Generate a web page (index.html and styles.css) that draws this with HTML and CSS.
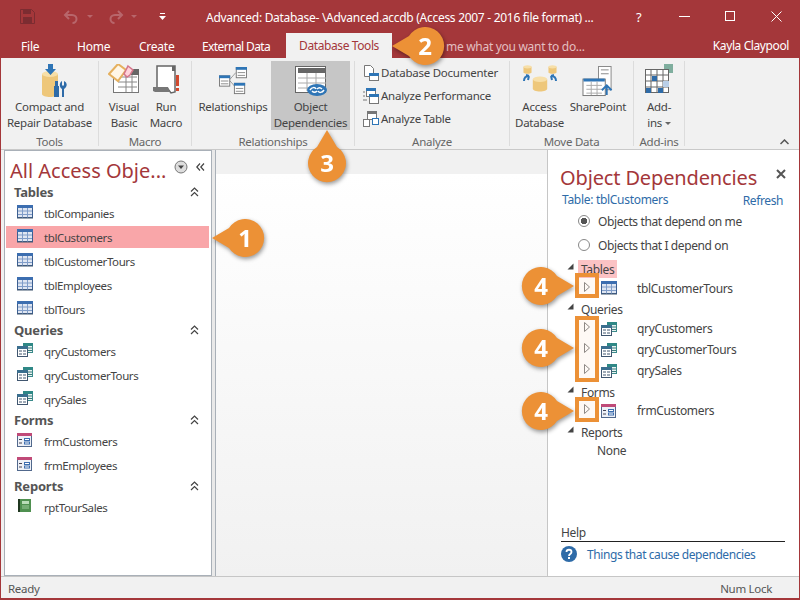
FILE: index.html
```html
<!DOCTYPE html>
<html lang="en">
<head>
<meta charset="utf-8">
<title>Object Dependencies</title>
<link rel="stylesheet" href="styles.css">
</head>
<body>
<svg class="defs" width="0" height="0" aria-hidden="true">
  <symbol id="tbl" viewBox="0 0 16 14">
    <rect x="0.5" y="0.5" width="15" height="12" fill="#dfe6f2" stroke="#3c5f91"/>
    <rect x="0" y="0" width="16" height="3" fill="#3c6eb0"/>
    <path d="M5.5 3v10M10.5 3v10M1 6h14M1 9.5h14" stroke="#7f9cc8" fill="none"/>
    <rect x="0" y="12.5" width="16" height="1" fill="#40566f"/>
  </symbol>
  <symbol id="qry" viewBox="0 0 16 14">
    <rect x="6.5" y="0.5" width="9" height="9" fill="#e8f3f2" stroke="#3a8a8a"/>
    <rect x="6" y="0" width="10" height="3" fill="#2f8886"/>
    <path d="M11 5h4M11 7.5h4" stroke="#3a7a7a"/>
    <rect x="0.5" y="3.5" width="10" height="10" fill="#fff" stroke="#40566f"/>
    <rect x="0" y="3" width="11" height="3" fill="#3b6f8f"/>
    <path d="M2 8h3M6 8h3M2 11h3M6 11h3" stroke="#40566f"/>
  </symbol>
  <symbol id="frm" viewBox="0 0 16 14">
    <rect x="0.5" y="0.5" width="14" height="13" fill="#eef1f7" stroke="#51688c"/>
    <rect x="0" y="0" width="15" height="3" fill="#c04a78"/>
    <path d="M2 6.5h3M2 10h3" stroke="#445"/>
    <rect x="7.5" y="5.5" width="5" height="2" fill="#fff" stroke="#3c6eb0"/>
    <rect x="7.5" y="9" width="5" height="2" fill="#fff" stroke="#3c6eb0"/>
  </symbol>
  <symbol id="rpt" viewBox="0 0 14 14">
    <rect x="0" y="0" width="13" height="13" fill="#4f9050"/>
    <rect x="0" y="0" width="2" height="13" fill="#203820"/>
    <rect x="4" y="2" width="7" height="3" fill="#b9dcb8"/>
    <path d="M4 7h7M4 9h7" stroke="#9ccb9a"/>
  </symbol>
  <symbol id="arrow" viewBox="0 0 8 12">
    <path d="M1.5 1.500L6.500 6l-5 4.500z" fill="#fff" stroke="#8a8a8a"/>
  </symbol>
  <symbol id="open" viewBox="0 0 7 7">
    <path d="M6.500 0.500v6h-6z" fill="#444"/>
  </symbol>
  <symbol id="chev" viewBox="0 0 9 10">
    <path d="M1 4.500l3.500-3.500 3.500 3.500M1 9l3.500-3.500L8 9" fill="none" stroke="#444" stroke-width="1.200"/>
  </symbol>
  <symbol id="cyl" viewBox="0 0 20 20">
    <path d="M1 4v12c0 2 4 3.500 9 3.500s9-1.500 9-3.500V4z" fill="#eec77a"/>
    <ellipse cx="10" cy="4" rx="9" ry="3.500" fill="#f7dfa8"/>
  </symbol>
</svg>

<div class="app">
  <header class="titlebar">
    <div class="qat">
      <svg class="qat-save" width="15" height="15" viewBox="0 0 15 15"><path d="M0.500 0.500h11l3 3v11h-14z" fill="none" stroke="#7c2c31"/><rect x="3" y="1" width="8" height="4" fill="#7c2c31"/><rect x="3" y="8" width="9" height="6" fill="#7c2c31"/></svg>
      <svg class="qat-undo" width="16" height="14" viewBox="0 0 16 14"><path d="M6 1L2 5l4 4M2 5h7c3 0 4.500 2 4.500 4s-1.500 4-4 4" fill="none" stroke="#b8666b" stroke-width="2"/></svg>
      <span class="qat-drop"></span>
      <svg class="qat-redo" width="16" height="14" viewBox="0 0 16 14"><path d="M10 1l4 4-4 4M14 5H7C4 5 2.500 7 2.500 9s1.500 4 4 4" fill="none" stroke="#b8666b" stroke-width="2"/></svg>
      <span class="qat-drop qat-drop2"></span>
      <svg class="qat-more" width="7" height="8" viewBox="0 0 7 8"><path d="M1 0.500h5" stroke="#fff"/><path d="M0 3h7L3.500 7z" fill="#fff"/></svg>
    </div>
    <div class="doc-title">Advanced: Database- \Advanced.accdb (Access 2007 - 2016 file format) ...</div>
    <div class="winctl">
      <span class="win-help">?</span>
      <svg width="11" height="1" viewBox="0 0 11 1" class="win-min"><path d="M0 0.500h11" stroke="#fff"/></svg>
      <svg width="11" height="11" viewBox="0 0 11 11" class="win-max"><rect x="0.500" y="0.500" width="9" height="9" fill="none" stroke="#fff"/></svg>
      <svg width="11" height="11" viewBox="0 0 11 11" class="win-close"><path d="M0.500 0.500l10 10M10.500 0.500l-10 10" stroke="#fff"/></svg>
    </div>
  </header>

  <nav class="tabs">
    <span class="tab tab-file">File</span>
    <span class="tab tab-home">Home</span>
    <span class="tab tab-create">Create</span>
    <span class="tab tab-ext">External Data</span>
    <span class="tab tab-active">Database Tools</span>
    <span class="tell">me what you want to do...</span>
    <span class="user">Kayla Claypool</span>
  </nav>

  <section class="ribbon">
    <div class="group g-tools">
      <div class="group-body">
        <div class="big b-compact">
          <svg class="big-icon i-compact" width="25" height="33" viewBox="0 0 25 33">
            <path d="M0 10v20c0 2 4 3 8 3s8-1 8-3V10z" fill="#eec77a"/>
            <ellipse cx="8" cy="10" rx="8" ry="3" fill="#f7dfa8"/>
            <path d="M6 0h5v5h3l-5.500 6L3 5h3z" fill="#2e75b6"/>
            <path d="M13 17h3v5h1v11h-5V22h1z" fill="#2e6ba8"/>
            <path d="M20 17v4l1 1 1-1v-4c2.500 1 3.500 4 2 6-.5 1-1 1-2 2v8h-2v-8c-3-2-3-6 0-8z" fill="#2e6ba8"/>
          </svg>
          <span>Compact and<br>Repair Database</span>
        </div>
      </div>
      <div class="group-label">Tools</div>
    </div>
    <div class="group g-macro">
      <div class="group-body">
        <div class="big b-vb">
          <svg class="big-icon" width="32" height="30" viewBox="0 0 32 30">
            <rect x="5.500" y="8.500" width="25" height="20" fill="#fff" stroke="#777"/>
            <rect x="22" y="5" width="9" height="6" fill="#666"/>
            <path d="M10 13h19M10 18h19M10 23h19M18 11v17M24 11v17" stroke="#888"/>
            <path d="M10 0l8 6-8 11-9-7z" fill="#fff6e6" stroke="#e5b05e" stroke-width="2"/>
            <path d="M20 2l5 4-3 5-3 2-3-3z" fill="#ffd3da" stroke="#d4758a" stroke-width="1.500"/>
          </svg>
          <span>Visual<br>Basic</span>
        </div>
        <div class="big b-run">
          <svg class="big-icon i-run" width="28" height="30" viewBox="0 0 28 30">
            <path d="M5 1h18v26l-4 1-3-4H5z" fill="#fff" stroke="#666" stroke-width="1.500"/>
            <path d="M1 22h15l2 5H3l-2-1z" fill="#777"/>
            <path d="M20 1h3v5h-3z" fill="#666"/>
            <rect x="24" y="10" width="3" height="11" fill="#d1492e"/><rect x="24" y="23" width="3" height="3" fill="#d1492e"/>
          </svg>
          <span>Run<br>Macro</span>
        </div>
      </div>
      <div class="group-label">Macro</div>
    </div>
    <div class="group g-rel">
      <div class="group-body">
        <div class="big b-rel">
          <svg class="big-icon i-rel" width="30" height="28" viewBox="0 0 30 30">
            <path d="M11 14l7-8M11 14l7 8" stroke="#999" fill="none"/>
            <rect x="0.500" y="9.500" width="11" height="11" fill="#fff" stroke="#777"/><rect x="0" y="9" width="12" height="3" fill="#2e75b6"/><path d="M2 15h8M2 18h8" stroke="#888"/>
            <rect x="18.500" y="0.500" width="11" height="11" fill="#fff" stroke="#777"/><rect x="18" y="0" width="12" height="3" fill="#2e75b6"/><path d="M20 6h8M20 9h8" stroke="#888"/>
            <rect x="16.500" y="17.500" width="11" height="11" fill="#fff" stroke="#777"/><rect x="16" y="17" width="12" height="3" fill="#2e75b6"/><path d="M18 23h8M18 26h8" stroke="#888"/>
          </svg>
          <span>Relationships</span>
        </div>
        <div class="big b-obj">
          <svg class="big-icon i-obj" width="32" height="30" viewBox="0 0 32 30">
            <rect x="0.500" y="0.500" width="30" height="26" fill="#fff" stroke="#666"/>
            <rect x="3" y="2" width="28" height="5" fill="#666"/>
            <path d="M3 12h28M3 17h28M3 22h28M12 7v18M21 7v18" stroke="#aaa" fill="none"/>
            <ellipse cx="22" cy="24" rx="10" ry="6" fill="#2e75b6"/>
            <path d="M15 24c2-3 5-3 6-1M29 24c-2 3-5 3-6 1M17 25c2 2 4 1 5 0M27 23c-2-2-4-1-5 0" stroke="#fff" stroke-width="1.500" fill="none"/>
          </svg>
          <span>Object<br>Dependencies</span>
        </div>
      </div>
      <div class="group-label">Relationships</div>
    </div>
    <div class="group g-analyze">
      <div class="group-body small-col">
        <div class="small">
          <svg width="16" height="16" viewBox="0 0 16 16"><path d="M1.500 0.500h6l3 3v8h-9z" fill="#fff" stroke="#777"/><rect x="6.500" y="8.500" width="9" height="7" fill="#fff" stroke="#777"/><rect x="6" y="8" width="10" height="3" fill="#2e75b6"/></svg>
          <span>Database Documenter</span>
        </div>
        <div class="small">
          <svg width="16" height="16" viewBox="0 0 16 16"><rect x="3.500" y="0.500" width="9" height="8" fill="#fff" stroke="#777"/><rect x="3" y="0" width="10" height="3" fill="#2e75b6"/><rect x="6.500" y="6.500" width="9" height="9" fill="#fff" stroke="#777"/><rect x="6" y="6" width="10" height="3" fill="#2e75b6"/><path d="M0 4h2M0 8h2M0 12h4" stroke="#777"/></svg>
          <span>Analyze Performance</span>
        </div>
        <div class="small">
          <svg width="16" height="16" viewBox="0 0 16 16"><rect x="4.500" y="0.500" width="9" height="8" fill="#fff" stroke="#777"/><rect x="4" y="0" width="10" height="3" fill="#777"/><rect x="0.500" y="8.500" width="6" height="7" fill="#fff" stroke="#777"/><rect x="9.500" y="7.500" width="6" height="6" fill="#fff" stroke="#2e75b6"/></svg>
          <span>Analyze Table</span>
        </div>
      </div>
      <div class="group-label">Analyze</div>
    </div>
    <div class="group g-move">
      <div class="group-body">
        <div class="big b-access">
          <svg class="big-icon" width="34" height="30" viewBox="0 0 34 30">
            <use href="#cyl" x="0" y="0" width="9" height="11"/>
            <use href="#cyl" x="25" y="0" width="9" height="11"/>
            <use href="#cyl" x="9" y="10" width="16" height="20"/>
            <path d="M1 17c0-3 2-5 5-5M6 12l-3-1M6 12l-1 4M33 17c0-3-2-5-5-5M28 12l3-1M28 12l1 4" stroke="#2e75b6" stroke-width="2" fill="none"/>
          </svg>
          <span>Access<br>Database</span>
        </div>
        <div class="big b-sp">
          <svg class="big-icon i-sp" width="32" height="31" viewBox="0 0 32 32">
            <rect x="16.500" y="0.500" width="13" height="24" fill="#fff" stroke="#888"/>
            <path d="M19 4h8M19 8h8" stroke="#888"/>
            <rect x="0.500" y="13.500" width="23" height="17" fill="#fff" stroke="#777"/>
            <rect x="1" y="13" width="22" height="3" fill="#2e75b6"/>
            <path d="M4 20h16M4 24h16M4 28h16M9 16v14M15 16v14" stroke="#aaa"/>
            <path d="M25 30v-9M20 25l5-5 5 5" stroke="#2e75b6" stroke-width="2" fill="none"/>
          </svg>
          <span>SharePoint</span>
        </div>
      </div>
      <div class="group-label">Move Data</div>
    </div>
    <div class="group g-addins">
      <div class="group-body">
        <div class="big b-addins">
          <svg class="big-icon" width="28" height="30" viewBox="0 0 28 30">
            <rect x="19" y="0" width="9" height="9" fill="#7fae9e"/>
            <rect x="0.500" y="5.500" width="23" height="23" fill="#fff" stroke="#666"/>
            <path d="M6 5v24M12 5v24M18 5v24M0 11h24M0 17h24M0 23h24" stroke="#666"/>
            <rect x="7" y="12" width="5" height="5" fill="#2e6ba8"/><rect x="1" y="24" width="5" height="5" fill="#2e6ba8"/><rect x="13" y="24" width="5" height="5" fill="#2e6ba8"/><rect x="18" y="17" width="6" height="6" fill="#b9cfe8"/>
          </svg>
          <span>Add-<br>ins <i class="caret"></i></span>
        </div>
      </div>
      <div class="group-label">Add-ins</div>
    </div>
    <svg class="collapse" width="9" height="6" viewBox="0 0 9 6"><path d="M0.500 5l4-4 4 4" fill="none" stroke="#555" stroke-width="1.500"/></svg>
  </section>

  <main class="workspace">
    <aside class="nav">
      <div class="nav-inner">
        <div class="nav-head">
          <span class="nav-title">All Access Obje...</span>
          <svg class="nav-menu" width="14" height="14" viewBox="0 0 14 14"><circle cx="7" cy="7" r="6" fill="#ddd" stroke="#777"/><path d="M4 5.500h6L7 9z" fill="#444"/></svg>
          <svg class="nav-shut" width="9" height="8" viewBox="0 0 9 8"><path d="M4 0.500L0.800 4 4 7.500M8 0.500L4.800 4 8 7.500" fill="none" stroke="#444" stroke-width="1.200"/></svg>
        </div>
        <div class="sec"><span>Tables</span><svg width="9" height="10"><use href="#chev"/></svg></div>
        <div class="item"><svg width="16" height="14"><use href="#tbl"/></svg><span>tblCompanies</span></div>
        <div class="item item-on"><svg width="16" height="14"><use href="#tbl"/></svg><span>tblCustomers</span></div>
        <div class="item"><svg width="16" height="14"><use href="#tbl"/></svg><span>tblCustomerTours</span></div>
        <div class="item"><svg width="16" height="14"><use href="#tbl"/></svg><span>tblEmployees</span></div>
        <div class="item"><svg width="16" height="14"><use href="#tbl"/></svg><span>tblTours</span></div>
        <div class="sec"><span>Queries</span><svg width="9" height="10"><use href="#chev"/></svg></div>
        <div class="item"><svg width="16" height="14"><use href="#qry"/></svg><span>qryCustomers</span></div>
        <div class="item"><svg width="16" height="14"><use href="#qry"/></svg><span>qryCustomerTours</span></div>
        <div class="item"><svg width="16" height="14"><use href="#qry"/></svg><span>qrySales</span></div>
        <div class="sec"><span>Forms</span><svg width="9" height="10"><use href="#chev"/></svg></div>
        <div class="item"><svg width="16" height="14"><use href="#frm"/></svg><span>frmCustomers</span></div>
        <div class="item"><svg width="16" height="14"><use href="#frm"/></svg><span>frmEmployees</span></div>
        <div class="sec"><span>Reports</span><svg width="9" height="10"><use href="#chev"/></svg></div>
        <div class="item"><svg width="16" height="14"><use href="#rpt"/></svg><span>rptTourSales</span></div>
      </div>
      <div class="nav-split"></div>
    </aside>

    <section class="center">
      <div class="center-strip"></div>
      <div class="center-body"></div>
    </section>

    <aside class="pane">
      <div class="pane-head">
        <span class="pane-title">Object Dependencies</span>
        <svg class="pane-close" width="10" height="10" viewBox="0 0 10 10"><path d="M1 1l8 8M9 1l-8 8" stroke="#555" stroke-width="2"/></svg>
      </div>
      <div class="pane-sub">
        <span>Table: tblCustomers</span>
        <span class="refresh">Refresh</span>
      </div>
      <div class="radio radio-on"><i></i><span>Objects that depend on me</span></div>
      <div class="radio"><i></i><span>Objects that I depend on</span></div>
      <div class="tree">
        <div class="t-head t-first"><svg width="7" height="7"><use href="#open"/></svg><span class="t-mark">Tables</span></div>
        <div class="t-row"><svg class="t-arrow" width="8" height="12"><use href="#arrow"/></svg><svg width="16" height="14"><use href="#tbl"/></svg><span>tblCustomerTours</span></div>
        <div class="t-head"><svg width="7" height="7"><use href="#open"/></svg><span>Queries</span></div>
        <div class="t-row t-tight"><svg class="t-arrow" width="8" height="12"><use href="#arrow"/></svg><svg width="16" height="14"><use href="#qry"/></svg><span>qryCustomers</span></div>
        <div class="t-row t-tight"><svg class="t-arrow" width="8" height="12"><use href="#arrow"/></svg><svg width="16" height="14"><use href="#qry"/></svg><span>qryCustomerTours</span></div>
        <div class="t-row t-tight"><svg class="t-arrow" width="8" height="12"><use href="#arrow"/></svg><svg width="16" height="14"><use href="#qry"/></svg><span>qrySales</span></div>
        <div class="t-head"><svg width="7" height="7"><use href="#open"/></svg><span>Forms</span></div>
        <div class="t-row t-gap"><svg class="t-arrow" width="8" height="12"><use href="#arrow"/></svg><svg width="16" height="14"><use href="#frm"/></svg><span>frmCustomers</span></div>
        <div class="t-head"><svg width="7" height="7"><use href="#open"/></svg><span>Reports</span></div>
        <div class="t-none">None</div>
      </div>
      <div class="help">
        <div class="help-title">Help</div>
        <div class="help-link">
          <svg width="16" height="16" viewBox="0 0 16 16"><circle cx="8" cy="8" r="8" fill="#2e6ba8"/><path d="M5.500 6c0-3 5-3 5 0 0 2-2.500 2-2.500 4" fill="none" stroke="#fff" stroke-width="1.800"/><rect x="7" y="11" width="2" height="2" fill="#fff"/></svg>
          <span>Things that cause dependencies</span>
        </div>
      </div>
    </aside>
  </main>

  <footer class="status"><span>Ready</span><span>Num Lock</span></footer>

  <div class="box box-a"></div>
  <div class="box box-b"></div>
  <div class="box box-c"></div>

  <div class="callout cr c1"><svg width="54" height="40" viewBox="0 0 54 40"><path d="M0 20L17 10A19 19 0 1 1 17 30z" fill="#ec9136"/></svg><b>1</b></div>
  <div class="callout cr c2"><svg width="54" height="40" viewBox="0 0 54 40"><path d="M0 20L17 10A19 19 0 1 1 17 30z" fill="#ec9136"/></svg><b>2</b></div>
  <div class="callout c3"><svg width="40" height="54" viewBox="0 0 40 54"><path d="M20 0L30 17A19 19 0 1 1 10 17z" fill="#ec9136"/></svg><b>3</b></div>
  <div class="callout c4 c4a"><svg width="54" height="40" viewBox="0 0 54 40"><path d="M54 20L37 10A19 19 0 1 0 37 30z" fill="#ec9136"/></svg><b>4</b></div>
  <div class="callout c4 c4b"><svg width="54" height="40" viewBox="0 0 54 40"><path d="M54 20L37 10A19 19 0 1 0 37 30z" fill="#ec9136"/></svg><b>4</b></div>
  <div class="callout c4 c4c"><svg width="54" height="40" viewBox="0 0 54 40"><path d="M54 20L37 10A19 19 0 1 0 37 30z" fill="#ec9136"/></svg><b>4</b></div>
</div>
</body>
</html>
```

FILE: styles.css
```css
* { box-sizing: border-box; }
html, body { margin: 0; padding: 0; }
body { font-family: "Noto Sans", "Liberation Sans", sans-serif; font-size: 12px; color: #444; background: #fff; overflow: hidden; }
.defs { position: absolute; }
svg { display: block; flex: none; }

.app { position: relative; width: 800px; height: 600px; display: flex; flex-direction: column; background: #a4373a; overflow: hidden; padding: 0 1px 2px 1px; }

/* title bar */
.titlebar { height: 33px; display: flex; align-items: center; color: #fff; flex: none; }
.qat { display: flex; align-items: center; width: 205px; flex: none; padding-left: 19px; }
.qat-undo { margin-left: 28px; }
.qat-drop { width: 0; height: 0; border: 3px solid transparent; border-top: 3px solid #b8666b; margin: 3px 0 0 8px; }
.qat-redo { margin-left: 15px; }
.qat-drop2 { margin-left: 7px; }
.qat-more { margin-left: 22px; }
.doc-title { flex: 1; font-size: 12px; letter-spacing: -0.290px; white-space: nowrap; padding-top: 2px; }
.winctl { display: flex; align-items: center; width: 166px; flex: none; }
.win-help { margin-left: 3px; width: 43px; font-size: 13px; }
.win-min { margin-right: 35px; }
.win-max { margin-right: 35px; }

/* tabs */
.tabs { height: 25px; display: flex; align-items: center; color: #fff; flex: none; position: relative; padding: 1px 0 0 20px; }
.tab { letter-spacing: -0.200px; white-space: nowrap; flex: none; }
.tab-file { width: 56px; padding-top: 1px; }
.tab-home { width: 62px; }
.tab-create { width: 63px; letter-spacing: -0.250px; }
.tab-ext { width: 84px; letter-spacing: -0.600px; }
.tab-active { width: 106px; align-self: stretch; height: 25px; margin-top: -1px; line-height: 26px; text-align: center; background: #f1f1f1; color: #a4373a; letter-spacing: -0.400px; }
.tell { margin-left: 54px; color: #e3bfc0; letter-spacing: -0.300px; white-space: nowrap; }
.user { margin: -2px 10px 0 auto; letter-spacing: -0.400px; }

/* ribbon */
.ribbon { height: 92px; background: #f1f1f1; border-bottom: 1px solid #c9c9c9; display: flex; padding-top: 3px; flex: none; position: relative; font-size: 11.500px; letter-spacing: -0.250px; }
.group { display: flex; flex-direction: column; border-right: 1px solid #dcdcdc; height: 85px; flex: none; }
.group-body { height: 70px; flex: none; display: flex; }
.group-label { height: 15px; line-height: 22px; text-align: center; color: #666; white-space: nowrap; }
.g-tools { width: 98px; }
.g-macro { width: 93px; }
.g-rel { width: 163px; }
.g-analyze { width: 155px; }
.g-move { width: 124px; }
.g-addins { width: 51px; }
.big { display: flex; flex-direction: column; align-items: center; text-align: center; line-height: 16px; white-space: nowrap; height: 69px; padding-top: 3px; }
.big span { margin-top: auto; height: 31px; }
.i-compact { margin: 0 0 0 9px; }
.i-run { margin-top: 1px; }
.i-rel { margin-top: 3px; }
.i-obj { margin-top: 2px; }
.i-sp { margin-top: 2px; }
.b-compact { width: 97px; }
.b-vb { width: 50px; }
.b-run { width: 34px; }
.b-rel { width: 79px; padding-left: 3px; }
.b-obj { width: 79px; background: #c6c6c6; }
.b-access { width: 59px; }
.b-sp { width: 58px; }
.b-addins { width: 50px; }
.caret { display: inline-block; width: 0; height: 0; border: 3px solid transparent; border-top: 3px solid #666; vertical-align: -1px; }
.small-col { flex-direction: column; padding: 0 0 0 8px; }
.small { height: 23px; display: flex; align-items: center; gap: 2px; white-space: nowrap; }
.collapse { position: absolute; right: 10px; bottom: 4px; }

/* workspace */
.workspace { flex: 1; display: flex; min-height: 0; background: #f1f1f1; padding-left: 3px; border-bottom: 1px solid #c6c6c6; }
.nav { width: 212px; display: flex; flex: none; }
.nav-inner { width: 208px; background: #fff; border: 1px solid #a9b0b8; padding: 0 2px 0 1px; overflow: hidden; }
.nav-split { width: 4px; background: #e9e9e9; border-right: 1px solid #a9b0b8; }
.nav-head { height: 32px; display: flex; align-items: center; padding-left: 4px; }
.nav-title { font-size: 20px; color: #a4373a; width: 164px; white-space: nowrap; margin-top: 6px; }
.nav-shut { margin-left: 8px; }
.sec { height: 18px; display: flex; align-items: center; justify-content: space-between; padding: 0 10px 0 8px; font-weight: 700; font-size: 13px; color: #555; letter-spacing: -0.200px; }
.item { height: 24px; border: solid transparent; border-width: 1px 0; background-clip: padding-box; display: flex; align-items: center; padding-left: 11px; gap: 11px; font-size: 11.500px; letter-spacing: -0.390px; }
.item svg { margin-top: -2px; }
.item-on { background-color: #f9a6a9; }

/* centre */
.center { flex: 1; display: flex; flex-direction: column; min-width: 0; }
.center-strip { height: 24px; background: #f1f1f1; flex: none; }
.center-body { flex: 1; background: linear-gradient(#fff, #f1f1f1); }

/* pane */
.pane { width: 252px; flex: none; background: #fff; border-left: 1px solid #c6c6c6; display: flex; flex-direction: column; padding-left: 12px; position: relative; letter-spacing: -0.350px; }
.pane-head { display: flex; align-items: center; justify-content: space-between; height: 40px; padding: 14px 13px 0 0; }
.pane-title { font-size: 20px; color: #a4373a; letter-spacing: -0.140px; white-space: nowrap; }
.pane-close { margin-top: -6px; }
.pane-sub { display: flex; justify-content: space-between; height: 19px; align-items: center; color: #2e6ba8; padding: 0 16px 0 2px; letter-spacing: -0.300px; }
.refresh { padding-top: 2px; letter-spacing: -0.400px; }
.radio { height: 24px; display: flex; align-items: center; gap: 8px; padding-left: 18px; letter-spacing: -0.390px; }
.radio i { width: 12px; height: 12px; border-radius: 50%; border: 1px solid #888; background: #fff; flex: none; }
.radio-on i { background: radial-gradient(circle, #555 0 3px, #fff 3.500px); }
.tree { padding-left: 7px; margin-top: 3px; flex: 1; }
.t-head { height: 20px; padding-top: 2px; display: flex; align-items: center; gap: 4px; }
.t-head svg { margin-top: -6px; }
.t-head span { padding: 0 3px; }
.t-first { height: 18px; padding-top: 0; }
.t-mark { background: #fbc2c4; height: 18px; line-height: 19px; }
.t-row { height: 20px; display: flex; align-items: center; padding-left: 16px; }
.t-row svg + svg { margin-left: 10px; }
.t-row span { margin-left: 20px; }
.t-arrow { margin-top: -3px; }
.t-tight { height: 21px; }
.t-gap { padding-bottom: 1px; }
.t-none { height: 20px; line-height: 20px; padding-left: 30px; }
.help { height: 54px; flex: none; padding: 0 14px 0 1px; }
.help-title { height: 20px; line-height: 21px; color: #444; border-bottom: 1px solid #222; }
.help-link { display: flex; align-items: center; gap: 10px; height: 24px; color: #2e6ba8; letter-spacing: -0.420px; }

/* status */
.status { height: 21px; flex: none; background: #f1f1f1; display: flex; justify-content: space-between; align-items: center; padding: 1px 27px 0 7px; color: #555; font-size: 11.500px; letter-spacing: -0.300px; }

/* overlays */
.box { position: absolute; left: 575px; width: 24px; border: 4px solid #ec9136; background: rgba(236,145,54,.05); }
.box-a { top: 273px; height: 25px; }
.box-b { top: 316px; height: 66px; }
.box-c { top: 397px; height: 25px; }
.callout { position: absolute; filter: drop-shadow(1px 2px 2px rgba(0,0,0,.4)); }
.callout b { position: absolute; width: 38px; height: 40px; text-align: center; color: #fff; font: 700 24px/40px "Open Sans", sans-serif; }
.cr b { left: 14px; top: 0; }
.c1 { left: 212px; top: 218px; }
.c2 { left: 392px; top: 26px; }
.c3 { left: 307px; top: 130px; }
.c3 b { left: 1px; top: 13px; }
.c4 b { left: 2px; top: 0; }
.c4a { left: 520px; top: 266px; }
.c4b { left: 520px; top: 328px; }
.c4c { left: 520px; top: 391px; }
```
